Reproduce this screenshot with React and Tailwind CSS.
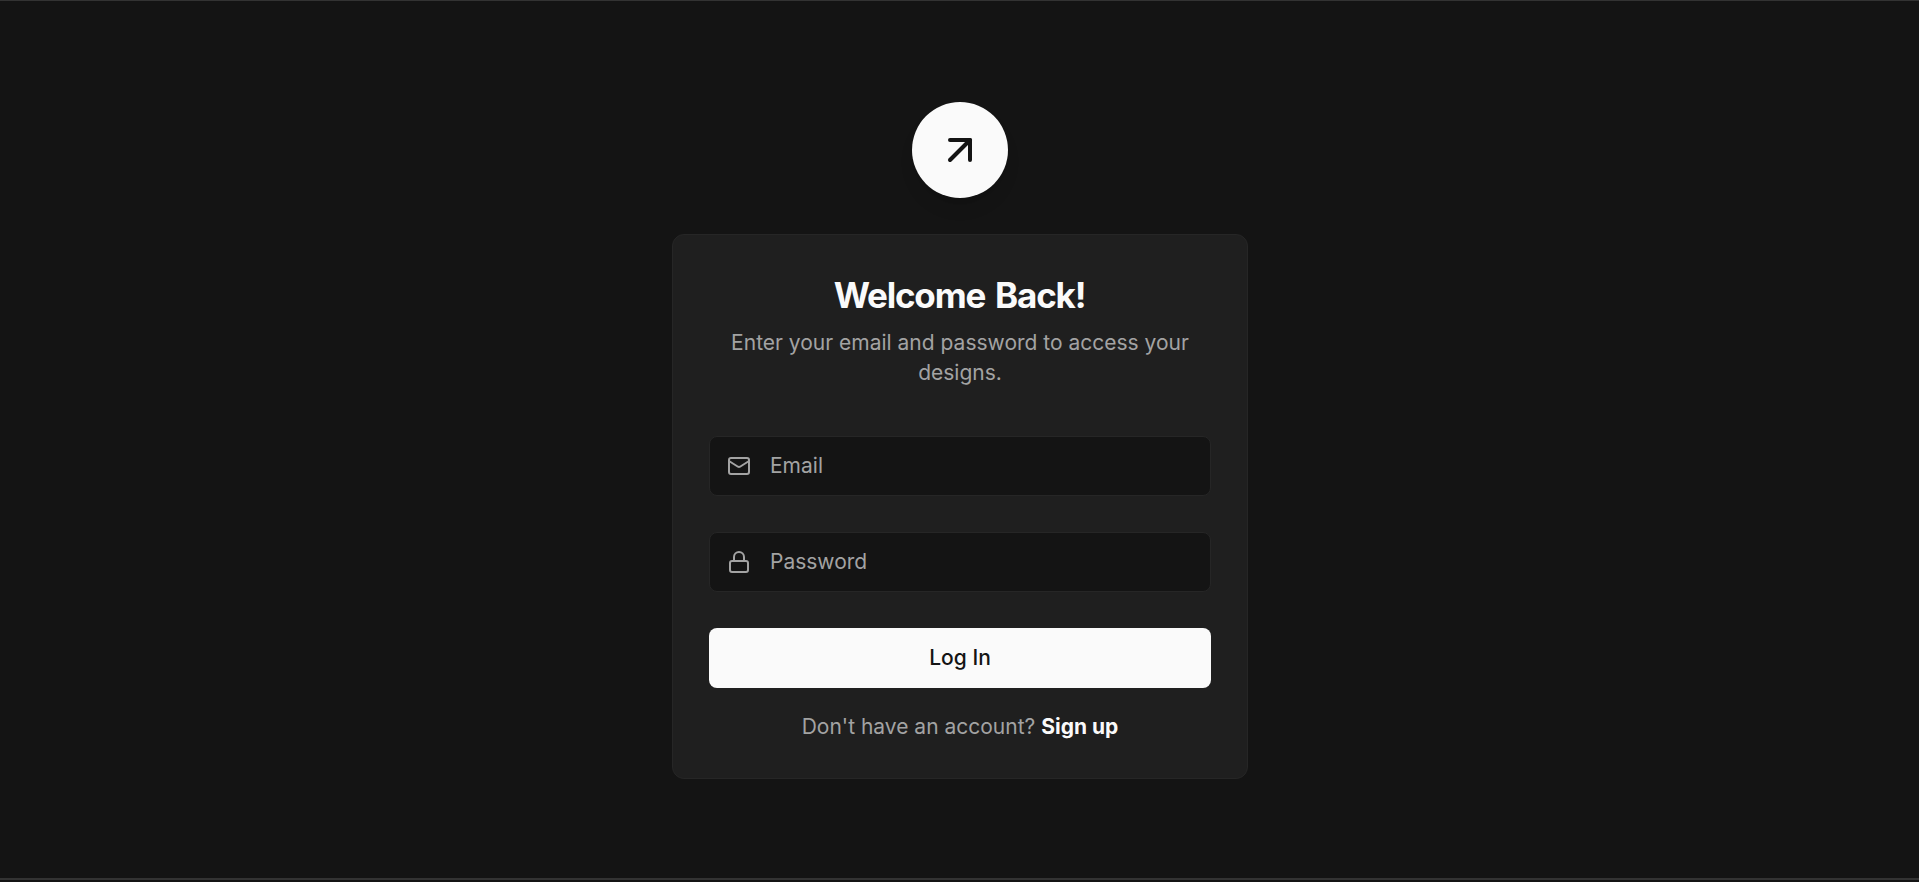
import React, { useState } from "react";
import { ArrowUpRight, Lock, Mail } from "lucide-react";

const fields = [
  { name: "email", type: "email", placeholder: "Email", Icon: Mail },
  { name: "password", type: "password", placeholder: "Password", Icon: Lock },
];

const Field = ({ Icon, ...props }) => {
  return (
    <label className="flex h-[60px] items-center rounded-lg border border-[#262626] bg-[#141414] pl-[17.5px]">
      <Icon className="size-6 shrink-0 text-[#a3a3a3]" strokeWidth={2} />
      <input
        {...props}
        className="ml-[19px] min-w-0 flex-1 bg-transparent text-[21px] leading-[30px] text-[#fafafa] outline-none placeholder:text-[#a3a3a3]"
      />
    </label>
  );
};

const App = () => {
  const [formData, setFormData] = useState({});

  return (
    <div className="h-[882px] bg-[#141414] font-['Inter',sans-serif]">
      <main className="h-[880px] border-t border-b-2 border-[#333] pt-[101px]">
        <div className="mx-auto flex w-[576px] flex-col items-center">
          <div className="flex size-24 items-center justify-center rounded-full bg-[#fafafa] text-[#141414] shadow-[0_12px_18px_-4px_rgb(0_0_0/0.1),0_5px_7px_-5px_rgb(0_0_0/0.1)]">
            <ArrowUpRight className="size-12" />
          </div>
          <section className="mt-9 h-[545px] w-full rounded-xl border border-[#262626] bg-[#1f1f1f] px-9 pt-9 text-center">
            <h1 className="h-[48px] text-[35px] leading-[48px] font-bold tracking-[-1.2px] text-[#fafafa] [word-spacing:3px]">
              Welcome Back!
            </h1>
            <p className="mt-[9px] pl-px text-[21px] leading-[30px] text-[#a3a3a3]">
              Enter your email and password to access your designs.
            </p>
            <form
              className="mt-12 flex flex-col gap-9"
              onSubmit={(e) => e.preventDefault()}
            >
              {fields.map((field) => (
                <Field
                  key={field.name}
                  {...field}
                  value={formData[field.name] || ""}
                  onChange={(e) =>
                    setFormData({ ...formData, [field.name]: e.target.value })
                  }
                />
              ))}
              <button className="h-[60px] rounded-lg bg-[#fafafa] pl-px text-[21px] leading-[30px] font-medium text-[#141414]">
                Log In
              </button>
            </form>
            <p className="mt-6 pl-px text-[21px] leading-[30px] text-[#a3a3a3]">
              Don't have an account?{" "}
              <a href="#signup" className="font-bold text-[#fafafa]">
                Sign up
              </a>
            </p>
          </section>
        </div>
      </main>
    </div>
  );
};

export default App;
